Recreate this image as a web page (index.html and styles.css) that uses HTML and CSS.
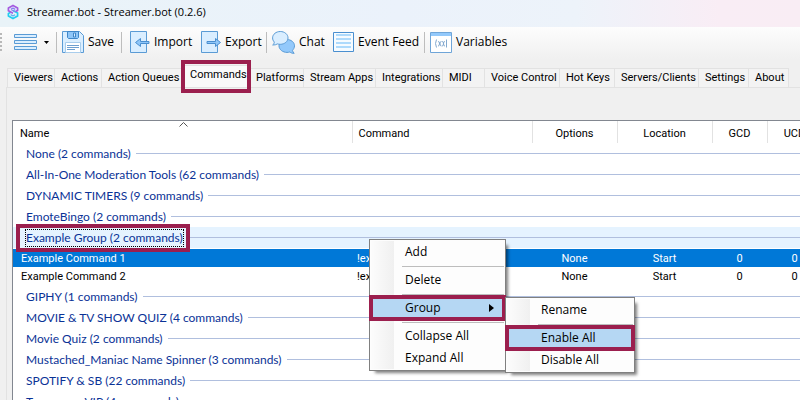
FILE: index.html
```
<!DOCTYPE html>
<html lang="en">
<head>
<meta charset="utf-8">
<title>Streamer.bot - Streamer.bot (0.2.6)</title>
<link rel="stylesheet" href="styles.css">
</head>
<body>
<div class="window">
  <header class="titlebar">
    <svg class="logo" width="12" height="16" viewBox="0 0 12 16" fill="none" stroke-width="1.700" stroke-linejoin="round">
      <path d="M6 6.600l4.600 2.500v2.800L6 14.600l-4.600-2.700V9.500l2-1" stroke="#22cdf0"/>
      <path d="M3.600 10.700l2.400 1.200 2.200-1.200" stroke="#5fb4f2" stroke-width="1.300"/>
      <path d="M6 9.200L1.400 6.800V4L6 1.400 10.600 4v2.500l-2 1" stroke="#a45be0"/>
      <path d="M3.800 5.300L6 4.100l2.300 1.200M4 5.500l4.200 2.300" stroke="#8a7cf0" stroke-width="1.300"/>
    </svg>
    <span>Streamer.bot - Streamer.bot (0.2.6)</span>
  </header>

  <nav class="toolbar" aria-label="Toolbar">
    <span class="grip"></span>
    <button class="tool main" aria-label="Menu">
      <svg width="23" height="17" viewBox="0 0 23 17" fill="#daeeff" stroke="#5a9bd5"><path d="M.5.5h22v3H.5zM.5 6.5h22v3H.5zM.5 12.5h22v3H.5z"/></svg>
      <svg width="5" height="3" viewBox="0 0 5 3"><path d="M0 0h5L2.5 3z" fill="#000"/></svg>
    </button>
    <span class="rule"></span>
    <button class="tool save">
      <svg width="22" height="22" viewBox="0 0 22 22"><path d="M.5.5h17l4 4v17H.5z" fill="#daeeff" stroke="#5a9bd5"/><path d="M5.500.5v6l1 1h9l1-1v-6z" fill="#8fc6f8" stroke="#3f86c8"/><path d="M11.500 2v4h2V2z" fill="#d7ecff" stroke="#3f86c8"/><path d="M3.500 21.500v-10h15v10z" fill="#fff" stroke="#a9cdec"/><path d="M5 14.500h12M5 16.500h12M5 18.500h8" stroke="#6e9fd0"/></svg>
      <span>Save</span>
    </button>
    <span class="rule"></span>
    <button class="tool import">
      <svg width="20" height="22" viewBox="0 0 20 22"><path d="M.5.5h16v21H.5z" fill="#daeeff" stroke="#5a9bd5"/><path d="M5.500 11.500l5-4v3H19v2h-8.500v3z" fill="#8fc6f8" stroke="#4a8fd0"/></svg>
      <span>Import</span>
    </button>
    <button class="tool export">
      <svg width="20" height="22" viewBox="0 0 20 22"><path d="M.5.5h16v21H.5z" fill="#daeeff" stroke="#5a9bd5"/><path d="M19.500 11.500l-5-4v3H6v2h8.500v3z" fill="#8fc6f8" stroke="#4a8fd0"/></svg>
      <span>Export</span>
    </button>
    <span class="rule"></span>
    <button class="tool chat">
      <svg width="23" height="23" viewBox="0 0 23 23" stroke="#5a9bd5"><path d="M15 8.500c4 0 7.500 2.800 7.500 6.300 0 1.900-.9 3.400-2 4.500.1 1.200.8 2.200 1.700 3-1.800.1-3.300-.4-4.400-1.300-1 .3-1.800.4-2.800.4-4.200 0-8-2.900-8-6.500S10.800 8.500 15 8.500z" fill="#93c9fb"/><path d="M8.300.5c4.200 0 7.700 2.800 7.700 6.400s-3.500 6.400-7.700 6.400c-1.100 0-2-.1-2.900-.4-1.200.8-2.700 1.200-4.700 1.100 1-.8 1.600-1.900 1.600-3C1.200 9.900.6 8.500.6 6.900.6 3.300 4.100.5 8.300.5z" fill="#daeeff"/></svg>
      <span>Chat</span>
    </button>
    <button class="tool feed">
      <svg width="21" height="20" viewBox="0 0 21 20"><path d="M.5.5h20v19H.5z" fill="#f6fbff" stroke="#4a8fd0"/><path d="M3 3h15M3 7h15M3 11h15M3 15h15" stroke="#aedafc" stroke-width="2"/></svg>
      <span>Event Feed</span>
    </button>
    <span class="rule"></span>
    <button class="tool vars">
      <svg width="22" height="21" viewBox="0 0 22 21" fill="none"><path d="M.5.5h21v20H.5z" fill="#fff" stroke="#6fa5d8"/><path d="M1 1h20v3H1z" fill="#93c9fb"/><path d="M6.500 7.500q-2 4 0 8M16.500 7.500v8M8 9.500q2 0 1.500 2.500T8 14M11.500 9.500q-2 0-1.500 2.500t1.500 2M12 9.500q2 0 1.500 2.500T12 14M15 9.500q-2 0-1.500 2.500t1.500 2" stroke="#83a9cf"/></svg>
      <span>Variables</span>
    </button>
  </nav>

  <nav class="tabs" aria-label="Sections">
    <button class="tab">Viewers</button>
    <button class="tab">Actions</button>
    <button class="tab">Action Queues</button>
    <button class="tab active marked">Commands</button>
    <button class="tab">Platforms</button>
    <button class="tab">Stream Apps</button>
    <button class="tab">Integrations</button>
    <button class="tab">MIDI</button>
    <button class="tab">Voice Control</button>
    <button class="tab">Hot Keys</button>
    <button class="tab">Servers/Clients</button>
    <button class="tab">Settings</button>
    <button class="tab">About</button>
  </nav>

  <main class="page">
    <div class="list">
      <table>
        <colgroup><col class="c-name"><col class="c-command"><col class="c-options"><col class="c-location"><col class="c-cd"><col class="c-cd"></colgroup>
        <thead>
          <tr><th>Name<svg class="sort" width="9" height="5" viewBox="0 0 9 5" fill="none" stroke="#555"><path d="M.5 4.500l4-4 4 4"/></svg></th><th>Command</th><th>Options</th><th>Location</th><th>GCD</th><th>UCD</th></tr>
        </thead>
        <tbody>
          <tr class="group"><td colspan="6"><div><span>None (2 commands)</span></div></td></tr>
          <tr class="group"><td colspan="6"><div><span>All-In-One Moderation Tools (62 commands)</span></div></td></tr>
          <tr class="group"><td colspan="6"><div><span>DYNAMIC TIMERS (9 commands)</span></div></td></tr>
          <tr class="group"><td colspan="6"><div><span>EmoteBingo (2 commands)</span></div></td></tr>
          <tr class="group current"><td colspan="6"><div><span class="marked">Example Group (2 commands)</span></div></td></tr>
          <tr class="item selected"><td>Example Command 1</td><td>!ex</td><td>None</td><td>Start</td><td>0</td><td>0</td></tr>
          <tr class="item last"><td>Example Command 2</td><td>!ex</td><td>None</td><td>Start</td><td>0</td><td>0</td></tr>
          <tr class="group"><td colspan="6"><div><span>GIPHY (1 commands)</span></div></td></tr>
          <tr class="group"><td colspan="6"><div><span>MOVIE &amp; TV SHOW QUIZ (4 commands)</span></div></td></tr>
          <tr class="group"><td colspan="6"><div><span>Movie Quiz (2 commands)</span></div></td></tr>
          <tr class="group"><td colspan="6"><div><span>Mustached_Maniac Name Spinner (3 commands)</span></div></td></tr>
          <tr class="group"><td colspan="6"><div><span>SPOTIFY &amp; SB (22 commands)</span></div></td></tr>
          <tr class="group"><td colspan="6"><div><span>Temporary VIP (4 commands)</span></div></td></tr>
        </tbody>
      </table>
    </div>
  </main>

  <div class="menu context" role="menu">
    <button role="menuitem">Add</button>
    <hr>
    <button role="menuitem">Delete</button>
    <hr>
    <button role="menuitem" class="hot marked">Group<svg width="5" height="8" viewBox="0 0 5 8"><path d="M0 0l5 4-5 4z"/></svg></button>
    <hr>
    <button role="menuitem">Collapse All</button>
    <button role="menuitem">Expand All</button>
    <div class="menu submenu" role="menu">
      <button role="menuitem">Rename</button>
      <hr>
      <button role="menuitem" class="hot marked">Enable All</button>
      <button role="menuitem">Disable All</button>
    </div>
  </div>
</div>
</body>
</html>
```
FILE: styles.css
```
* { box-sizing: border-box; }

body {
  margin: 0;
  background: #f0f0f0;
  color: #000;
  font: 12px/16px "Open Sans", "Noto Sans", sans-serif;
}

button {
  border: 0;
  margin: 0;
  padding: 0;
  background: none;
  color: inherit;
  font: inherit;
  text-align: left;
  white-space: nowrap;
}

.window {
  position: relative;
  display: flex;
  flex-direction: column;
  height: 100vh;
  overflow: hidden;
}

.titlebar {
  display: flex;
  align-items: center;
  gap: 8px;
  height: 27px;
  padding: 0 7px 4px;
  background: linear-gradient(90deg, #e9f3f8, #ebf2fb 50%, #edf3fa 72%, #f9edf5 90%, #f9edf4);
  font-size: 11px;
}

.toolbar {
  display: flex;
  align-items: center;
  height: 32px;
  padding-bottom: 2px;
  background: linear-gradient(#fdfdfd, #f0f0f0);
}

.grip {
  width: 2px;
  height: 19px;
  margin-right: 12px;
  background: repeating-linear-gradient(#b8b8b8 0 2px, transparent 2px 4px);
}

.rule {
  width: 1px;
  height: 21px;
  background: #bdbdbd;
}

.tool {
  display: flex;
  align-items: center;
  gap: 4px;
}

.tool.main { gap: 7px; width: 42px; }
.tool.save { width: 64px; padding-left: 5px; }
.tool.import { width: 79px; padding-left: 8px; }
.tool.export { width: 65px; }
.tool.chat { width: 66px; padding-left: 5px; }
.tool.feed { width: 91px; }
.tool.vars { padding-left: 5px; }

.tabs {
  display: grid;
  grid-template-columns: 48px 47px 80px 68px 54px 72px 67px 42px 75px 55px 84px 50px 40px;
  align-items: end;
  height: 28px;
  padding-left: 7px;
  font: 11px/16px Roboto, sans-serif;
}

.tab {
  height: 19px;
  padding-left: 6px;
  border: solid #e2e2e2;
  border-width: 1px 1px 0 0;
  background: #f3f3f3;
}

.tab:first-child { border-left-width: 1px; }

.tab.active {
  position: relative;
  height: 22px;
  padding: 0 0 3px 8px;
  background: #f9f9f9;
}

/* highlight frames */
.marked { position: relative; }

.marked::after {
  content: "";
  position: absolute;
  inset: -2px;
  border: 4px solid #9b1f4e;
  pointer-events: none;
}

.tab.marked::after { inset: -6px -2px -6px -1px; }

.page {
  flex: 1;
  min-height: 0;
  margin-left: 6px;
  padding: 32px 0 0 3px;
  border: solid #e2e2e2;
  border-width: 1px 0 0 1px;
}

.list {
  height: 100%;
  margin-left: 2px;
  border: solid #828790;
  border-width: 1px 0 0 1px;
  background: #fff;
  overflow: hidden;
}

table {
  width: 809px;
  border-collapse: collapse;
  table-layout: fixed;
  font: 11px/16px Roboto, sans-serif;
}

.c-name { width: 339px; }
.c-command { width: 180px; }
.c-options { width: 85px; }
.c-location { width: 95px; }
.c-cd { width: 55px; }

th, td { padding: 0; white-space: nowrap; }

th {
  position: relative;
  height: 22px;
  padding-top: 3px;
  font-weight: 400;
  border-right: 1px solid #e2e2e2;
}

th:nth-child(1) { padding-left: 7px; text-align: left; }
th:nth-child(2) { padding-left: 6px; text-align: left; }

.sort {
  position: absolute;
  left: 49%;
  top: 1px;
}

.group td { height: 21px; vertical-align: top; }

.group div {
  display: flex;
  align-items: center;
  gap: 5px;
  height: 21px;
  padding-left: 13px;
  color: #0a3296;
  font: 12px/16px Lato, sans-serif;
}

.group div::after {
  content: "";
  flex: 1;
  height: 1px;
  background: #b0bfde;
}

.group.current td { height: 22px; }
.group.current div { background: #e5f3ff; }

.group.current span { outline: 1px dotted #000; }
.group span.marked::after { inset: -6px -7px -6px -10px; }

.item td { height: 18px; padding-top: 1px; text-align: center; }
.item td:nth-child(1) { padding-left: 8px; text-align: left; }
.item td:nth-child(2) { padding-left: 5px; text-align: left; }
.item.last td { height: 19px; }
.selected { background: #0078d7; color: #fff; }

.menu {
  position: absolute;
  padding: 1px;
  border: 1px solid #808080;
  background: linear-gradient(90deg, #fcfcfc, #f0f0f0) 1px 1px / 23px calc(100% - 2px) no-repeat, #fdfdfd;
  box-shadow: 4px 4px 3px -2px rgba(0, 0, 0, .5);
}

.context { left: 369px; top: 239px; width: 137px; }
.submenu { left: 135px; top: 57px; width: 130px; }

.menu button {
  display: flex;
  align-items: center;
  justify-content: space-between;
  width: 100%;
  height: 22px;
  padding: 0 10px 0 34px;
}

.menu hr {
  height: 1px;
  margin: 3px 0 2px 31px;
  border: 0;
  background: #bdbdbd;
}

.menu .hot { background: #b5d7f3; }
```
